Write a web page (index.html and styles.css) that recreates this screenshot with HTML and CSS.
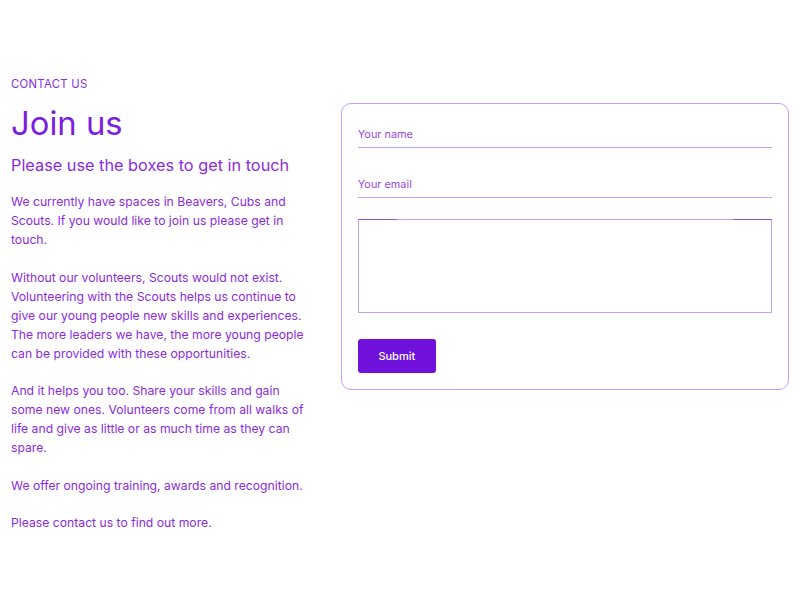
FILE: index.html
```html
<!DOCTYPE html>
<html lang="en">
<head>
<meta charset="utf-8">
<title>Contact us</title>
<link rel="stylesheet" href="styles.css">
</head>
<body>
<main class="page">
  <p class="eyebrow">Contact us</p>
  <div class="grid">
    <section class="intro">
      <h1 class="title">Join us</h1>
      <h2 class="subtitle">Please use the boxes to get in touch</h2>
      <p class="copy">We currently have spaces in Beavers, Cubs and Scouts. If you would like to join us please get in touch.</p>
      <p class="copy">Without our volunteers, Scouts would not exist. Volunteering with the Scouts helps us continue to give our young people new skills and experiences. The more leaders we have, the more young people can be provided with these opportunities.</p>
      <p class="copy">And it helps you too. Share your skills and gain some new ones. Volunteers come from all walks of life and give as little or as much time as they can spare.</p>
      <p class="copy">We offer ongoing training, awards and recognition.</p>
      <p class="copy">Please contact us to find out more.</p>
    </section>
    <form class="card">
      <input class="field" type="text" placeholder="Your name">
      <input class="field field-email" type="email" placeholder="Your email">
      <div class="area-wrap">
        <textarea class="area"></textarea>
      </div>
      <button class="submit" type="button">Submit</button>
    </form>
  </div>
</main>
</body>
</html>
```

FILE: styles.css
```css
* { box-sizing: border-box; }

body {
  margin: 0;
  background: #ffffff;
  font-family: Inter, "Liberation Sans", sans-serif;
  color: #8a2be2;
}

.page {
  padding: 76px 11px 40px;
}

.eyebrow {
  margin: 0 0 11px;
  font-size: 11.3px;
  line-height: 16px;
  letter-spacing: 0.3px;
  text-transform: uppercase;
  color: #8a2be2;
}

.grid {
  display: grid;
  grid-template-columns: 2fr 3fr;
  column-gap: 31px;
  align-items: start;
}

.title {
  margin: 0;
  font-size: 32.8px;
  line-height: 40px;
  font-weight: 400;
  color: #7a1ee0;
}

.subtitle {
  margin: 10px 0 15px;
  font-size: 16.3px;
  line-height: 24px;
  font-weight: 400;
  color: #8a2be2;
}

.copy {
  margin: 0 0 18.5px;
  font-size: 12.2px;
  line-height: 19px;
}

.card {
  display: flex;
  flex-direction: column;
  align-items: flex-start;
  border: 1px solid #c6a0f2;
  border-radius: 10px;
  padding: 16px;
}

.field {
  display: block;
  width: 100%;
  height: 28px;
  border: 0;
  border-bottom: 1px solid #c6a0f2;
  padding: 0;
  font-family: inherit;
  font-size: 10.9px;
  color: #8a2be2;
  background: transparent;
  outline: none;
}

.field::placeholder { color: #9a4ae6; }

.field-email { margin-top: 22px; }

.area-wrap {
  position: relative;
  width: 100%;
  margin-top: 21px;
}

.area-wrap::before,
.area-wrap::after {
  content: "";
  position: absolute;
  top: 0;
  width: 39px;
  height: 1px;
  background: #9550e2;
}

.area-wrap::before { left: 0; }
.area-wrap::after { right: 0; }

.area {
  display: block;
  width: 100%;
  height: 94px;
  border: 1px solid #c6a0f2;
  resize: none;
  outline: none;
  font-family: inherit;
  padding: 6px;
}

.submit {
  margin-top: 26px;
  width: 78px;
  height: 34px;
  border: 0;
  border-radius: 3px;
  background: #7011dc;
  color: #ffffff;
  font-family: inherit;
  font-size: 11px;
  font-weight: 500;
}
```
